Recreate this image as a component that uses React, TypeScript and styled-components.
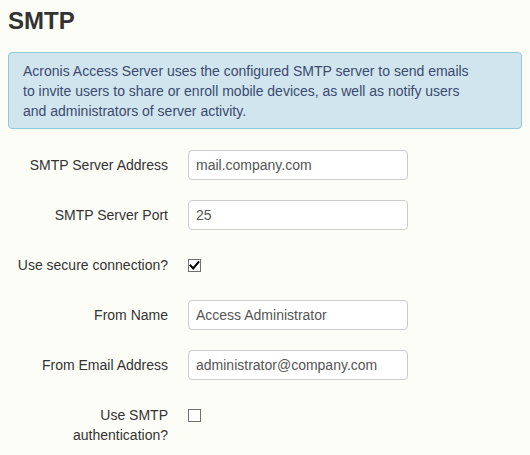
import React from "react";
import styled, { createGlobalStyle } from "styled-components";

const GlobalStyle = createGlobalStyle`
  html, body {
    margin: 0;
    padding: 0;
    background: #fdfdf7;
  }
  body {
    padding: 8px;
    font-family: "Liberation Sans", Arial, sans-serif;
    font-size: 14px;
    color: #333;
  }
`;

const Page = styled.div`
  display: flex;
  flex-direction: column;
`;

const Title = styled.h3`
  margin: 0 0 18px;
  font-size: 24px;
  line-height: 26px;
  font-weight: bold;
  color: #333;
`;

const Alert = styled.div`
  border: 1px solid #8ecad8;
  background: #d1e5ee;
  border-radius: 4px;
  padding: 8px 14px 7px;
  margin-bottom: 21px;
  color: #3b4a6e;
  line-height: 20px;
`;

const AlertText = styled.p`
  margin: 0;
  max-width: 460px;
`;

const Form = styled.form`
  display: flex;
  flex-direction: column;
  gap: 20px;
`;

const Group = styled.div`
  display: flex;
  align-items: flex-start;
  gap: 20px;
  min-height: 30px;
`;

const Label = styled.label`
  width: 160px;
  flex: none;
  text-align: right;
  padding-top: 5px;
  line-height: 20px;
  color: #333;
`;

const TextInput = styled.input`
  box-sizing: border-box;
  width: 220px;
  height: 30px;
  padding: 0 7px;
  border: 1px solid #ccc;
  border-radius: 4px;
  background: #fff;
  font-family: "Liberation Sans", Arial, sans-serif;
  font-size: 14px;
  color: #555;
  outline: none;
`;

const CheckWrap = styled.div`
  padding-top: 9px;
`;

const Box = styled.span<{ $checked?: boolean }>`
  box-sizing: border-box;
  display: flex;
  align-items: center;
  justify-content: center;
  width: 13px;
  height: 13px;
  border: 1px solid #6f6f6f;
  background: #fff;
`;

const Check = ({ checked }: { checked?: boolean }) => (
  <CheckWrap>
    <Box $checked={checked} role="checkbox" aria-checked={checked ? "true" : "false"}>
      {checked && (
        <svg width="11" height="11" viewBox="0 0 11 11">
          <path d="M1.6 5.6 L4.2 8.4 L9.4 2.2" fill="none" stroke="#000" strokeWidth="2.1" strokeLinecap="square" />
        </svg>
      )}
    </Box>
  </CheckWrap>
);

const fields: { label: string; value?: string; check?: boolean }[] = [
  { label: "SMTP Server Address", value: "mail.company.com" },
  { label: "SMTP Server Port", value: "25" },
  { label: "Use secure connection?", check: true },
  { label: "From Name", value: "Access Administrator" },
  { label: "From Email Address", value: "administrator@company.com" },
  { label: "Use SMTP authentication?", check: false },
];

export default function App() {
  return (
    <Page>
      <GlobalStyle />
      <Title>SMTP</Title>
      <Alert>
        <AlertText>
          Acronis Access Server uses the configured SMTP server to send emails to invite users to share or
          enroll mobile devices, as well as notify users and administrators of server activity.
        </AlertText>
      </Alert>
      <Form onSubmit={(e) => e.preventDefault()}>
        {fields.map((f) => (
          <Group key={f.label}>
            <Label>{f.label}</Label>
            {f.value !== undefined ? (
              <TextInput type="text" defaultValue={f.value} readOnly />
            ) : (
              <Check checked={f.check} />
            )}
          </Group>
        ))}
      </Form>
    </Page>
  );
}
